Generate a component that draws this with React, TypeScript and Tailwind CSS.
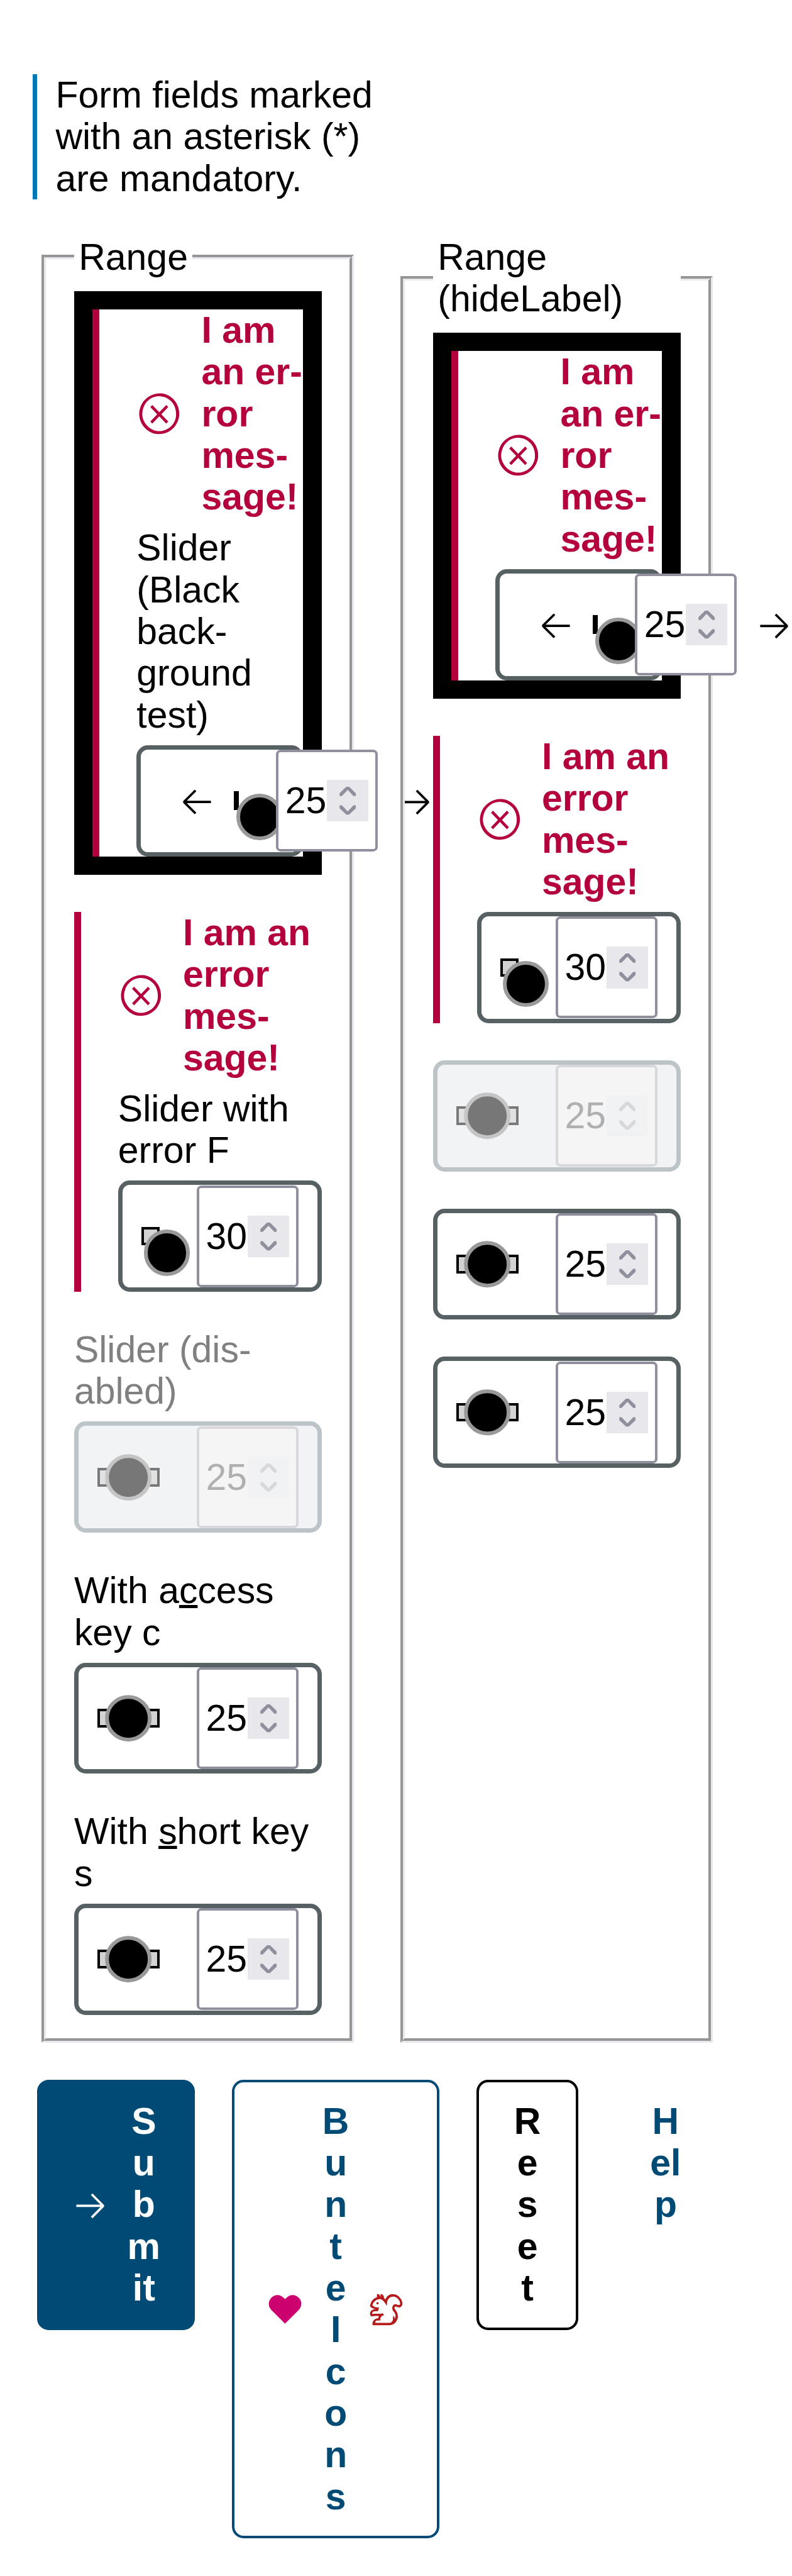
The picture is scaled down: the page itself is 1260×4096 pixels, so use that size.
import type { ReactNode } from "react";
import { VscSquirrel } from "react-icons/vsc";

function ArrowLeft() {
  return (
    <svg viewBox="0 0 16 16" fill="currentColor" className="size-[1em] shrink-0">
      <path d="M7 3.093l-5 5V8.8l5 5 .707-.707-4.146-4.147H14v-1H3.56L7.708 3.8 7 3.093z" />
    </svg>
  );
}

function ArrowRight() {
  return (
    <svg viewBox="0 0 16 16" fill="currentColor" className="size-[1em] shrink-0">
      <path d="M9 13.887l5-5V8.18l-5-5-.707.707 4.146 4.147H2v1h10.44L8.292 13.18l.707.707z" />
    </svg>
  );
}

function ErrorIcon() {
  return (
    <svg viewBox="0 0 16 16" fill="currentColor" className="size-[1.25em] shrink-0">
      <path d="M8.6 1c1.6.1 3.1.9 4.2 2 1.3 1.4 2 3.1 2 5.1 0 1.6-.6 3.1-1.6 4.4-1 1.2-2.4 2.1-4 2.4-1.6.3-3.2.1-4.6-.7-1.4-.8-2.5-2-3.1-3.5C.9 9.2.8 7.5 1.3 6c.5-1.6 1.4-2.9 2.8-3.8C5.4 1.3 7 .9 8.6 1zm.5 12.9c1.3-.3 2.5-1 3.4-2.1.8-1.1 1.3-2.4 1.2-3.8 0-1.6-.6-3.2-1.7-4.3-1-1-2.2-1.6-3.6-1.7-1.3-.1-2.7.2-3.8 1-1.1.8-1.9 1.9-2.3 3.3-.4 1.3-.4 2.7.2 4 .6 1.3 1.5 2.3 2.7 3 1.2.7 2.6.9 3.9.6zM7.9 7.5L10.3 5l.7.7-2.4 2.5 2.4 2.5-.7.7-2.4-2.5-2.4 2.5-.7-.7 2.4-2.5-2.4-2.5.7-.7 2.4 2.5z" />
    </svg>
  );
}

function HeartIcon() {
  return (
    <svg viewBox="0 0 16 16" fill="#cc006e" className="size-[1em] shrink-0">
      <path d="M14.88 4.78a3.489 3.489 0 0 0-.37-.9 3.24 3.24 0 0 0-.6-.79 3.78 3.78 0 0 0-1.21-.81 3.74 3.74 0 0 0-2.84 0 4 4 0 0 0-1.16.75l-.05.06-.65.65-.65-.65-.05-.06a4 4 0 0 0-1.16-.75 3.74 3.74 0 0 0-2.84 0 3.78 3.78 0 0 0-1.21.81 3.55 3.55 0 0 0-.97 1.69 3.75 3.75 0 0 0-.12 1c0 .317.04.633.12.94a4 4 0 0 0 .36.89 3.8 3.8 0 0 0 .61.79L8 14.31l5.91-5.91c.237-.233.44-.5.6-.79A3.578 3.578 0 0 0 15 5.78a3.747 3.747 0 0 0-.12-1z" />
    </svg>
  );
}

function Spinner({ disabled }: { disabled?: boolean }) {
  return (
    <span
      className={
        disabled
          ? "flex size-[1.125em] shrink-0 bg-[#f1f2f4] text-[#d8d8dc]"
          : "flex size-[1.125em] shrink-0 bg-[#e8e8ec] text-[#8f8f9d]"
      }
    >
      <svg viewBox="0 0 72 72" fill="currentColor" className="size-full">
        <path d="M22 28v-5l11.500-11h5L50 23v5h-4L36 17.500 26 28z" />
        <path d="M22 44v5l11.500 11h5L50 49v-5h-4L36 54.500 26 44z" />
      </svg>
    </span>
  );
}

type FieldProps = { value: number; disabled?: boolean; error?: boolean; arrows?: boolean };

function RangeInput({ value, disabled, error, arrows }: FieldProps) {
  return (
    <div
      className={
        disabled
          ? "flex h-[3em] items-center rounded-[0.3125em] border-[7px] border-[#bdc4c8] bg-[#f1f3f5] px-[calc(0.625em-7px)]"
          : "flex h-[3em] items-center rounded-[0.3125em] border-[7px] border-[#576164] bg-white px-[calc(0.625em-7px)]"
      }
    >
      {arrows && (
        <span className="mx-[0.5em] flex shrink-0">
          <ArrowLeft />
        </span>
      )}
      <span
        className={
          disabled
            ? "relative h-[0.5em] min-w-[0.125em] flex-1 border-4 border-[#797979] bg-[#e1e1e1]"
            : "relative h-[0.5em] min-w-[0.125em] flex-1 border-4 border-black bg-[#d3d3d3]"
        }
      >
        <span
          className={
            disabled
              ? "absolute top-1/2 left-1/2 size-[1.25em] -translate-1/2 rounded-full border-[6px] border-[#c5c5c5] bg-[#777777]"
              : error
                ? "absolute top-0 left-0 size-[1.25em] rounded-full border-[6px] border-[#999999] bg-black"
                : "absolute top-1/2 left-1/2 size-[1.25em] -translate-1/2 rounded-full border-[6px] border-[#999999] bg-black"
          }
        />
      </span>
      <span
        className={
          disabled
            ? "relative -my-px ml-[1em] flex h-[2.75em] w-[2.75em] shrink-0 items-center rounded-[0.125em] border-4 border-[#d8d8dc] bg-[#f5f5f5] pl-[calc(0.25em-4px)] text-[#b0b0b0]"
            : "relative -my-px ml-[1em] flex h-[2.75em] w-[2.75em] shrink-0 items-center rounded-[0.125em] border-4 border-[#8f8f9d] bg-white pl-[calc(0.25em-4px)]"
        }
      >
        <span className="w-[1.125em] shrink-0">{value}</span>
        <Spinner disabled={disabled} />
      </span>
      {arrows && (
        <span className="mx-[0.5em] flex shrink-0">
          <ArrowRight />
        </span>
      )}
    </div>
  );
}

function Field({ label, message, ...input }: FieldProps & { label?: ReactNode; message?: ReactNode }) {
  return (
    <div
      className={
        input.error
          ? "flex flex-col gap-[0.25em] border-l-[11px] border-[#b4003c] bg-white pl-[1em]"
          : "flex flex-col gap-[0.25em]"
      }
    >
      {message && (
        <div className="flex items-center gap-[0.5em] font-bold whitespace-nowrap text-[#b4003c]">
          <ErrorIcon />
          <span>{message}</span>
        </div>
      )}
      {label && <div className={input.disabled ? "whitespace-nowrap text-[#808080]" : "whitespace-nowrap"}>{label}</div>}
      <RangeInput {...input} />
    </div>
  );
}

const narrowMessage = (
  <>
    I am
    <br />
    an er-
    <br />
    ror
    <br />
    mes-
    <br />
    sage!
  </>
);

const wideMessage = (
  <>
    I am an
    <br />
    error
    <br />
    mes-
    <br />
    sage!
  </>
);

function Group({ legend, children }: { legend: ReactNode; children: ReactNode }) {
  return (
    <fieldset className="relative w-[8.429em] min-w-0 border-[7px] border-[#e8e8ec] px-[calc(0.875em-7px)] pt-[0.35em] pb-[calc(0.75em-7px)] [border-style:groove]">
      <legend className="px-[0.125em]">{legend}</legend>
      <div className="flex flex-col gap-[1em]">{children}</div>
    </fieldset>
  );
}

export default function App() {
  return (
    <main
      lang="en"
      className="min-h-[4096px] w-[1260px] overflow-hidden bg-white pt-[2em] text-[58.947px] leading-[1.125] text-black"
      style={{ fontFamily: '"Liberation Sans", Arial, sans-serif' }}
    >
      <p className="ml-[0.875em] border-l-[7px] border-[#0077b6] pl-[0.506em] whitespace-nowrap">
        Form fields marked
        <br />
        with an asterisk (*)
        <br />
        are mandatory.
      </p>

      <div className="mt-[1em] ml-[1.125em] flex gap-[1.258em]">
        <Group legend="Range">
          <div className="bg-black p-[0.5em]">
            <Field
              error
              arrows
              value={25}
              message={narrowMessage}
              label={
                <>
                  Slider
                  <br />
                  (Black
                  <br />
                  back-
                  <br />
                  ground
                  <br />
                  test)
                </>
              }
            />
          </div>
          <Field
            error
            value={30}
            message={wideMessage}
            label={
              <>
                Slider with
                <br />
                error F
              </>
            }
          />
          <Field
            disabled
            value={25}
            label={
              <>
                Slider (dis-
                <br />
                abled)
              </>
            }
          />
          <Field
            value={25}
            label={
              <>
                With a<u>c</u>cess
                <br />
                key c
              </>
            }
          />
          <Field
            value={25}
            label={
              <>
                With <u>s</u>hort key
                <br />s
              </>
            }
          />
        </Group>

        <Group
          legend={
            <span className="block w-[6.43em]">
              Range
              <br />
              (hideLabel)
            </span>
          }
        >
          <div className="bg-black p-[0.5em]">
            <Field error arrows value={25} message={narrowMessage} />
          </div>
          <Field error value={30} message={wideMessage} />
          <Field disabled value={25} />
          <Field value={25} />
          <Field value={25} />
        </Group>
      </div>

      <div className="mt-[1em] ml-[1em] flex items-start gap-[1em] text-center font-bold">
        <button className="flex items-center gap-[0.5em] rounded-[0.3125em] bg-[#004b76] px-[0.9375em] py-[0.5625em] font-bold text-white">
          <ArrowRight />
          <span className="w-[0.8895em] break-all">Submit</span>
        </button>
        <button className="flex items-center gap-[0.5em] rounded-[0.3125em] border-4 border-[#004b76] bg-white px-[calc(0.9375em-4px)] py-[calc(0.5625em-4px)] font-bold text-[#004b76]">
          <HeartIcon />
          <span className="w-[0.7227em] break-all">BunteIcons</span>
          <VscSquirrel className="size-[1em] shrink-0 text-[#b51a1a]" />
        </button>
        <button className="flex w-[2.75em] justify-center rounded-[0.3125em] border-4 border-black bg-white py-[calc(0.5625em-4px)] font-bold text-black">
          <span className="w-[0.8em] break-all">Reset</span>
        </button>
        <button className="flex w-[2.709em] justify-center py-[0.5625em] font-bold text-[#004b76]">
          <span className="w-[0.85em] break-all">Help</span>
        </button>
      </div>
    </main>
  );
}
